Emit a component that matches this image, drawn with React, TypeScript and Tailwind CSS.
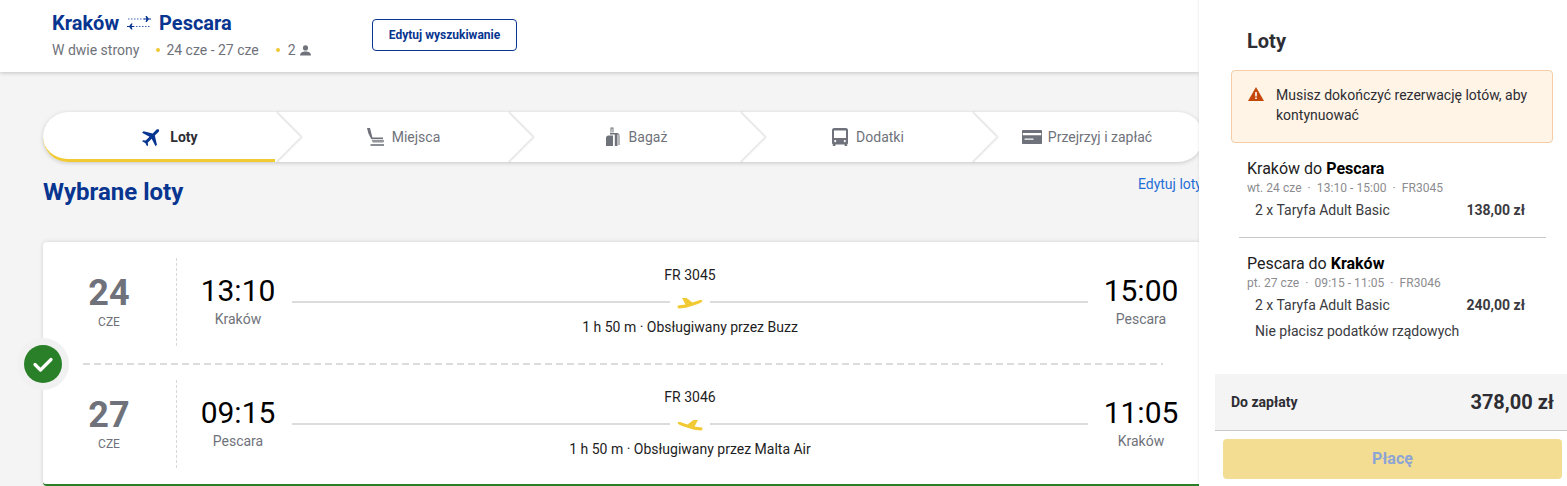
import { ReactNode } from "react";

const steps = [
  { label: "Loty", active: true, icon: <PlaneIcon /> },
  { label: "Miejsca", icon: <SeatIcon /> },
  { label: "Bagaż", icon: <BagIcon /> },
  { label: "Dodatki", icon: <BusIcon /> },
  { label: "Przejrzyj i zapłać", icon: <CardIcon /> },
];

const stepZ = ["z-50 pl-[20px]", "z-40 pl-[24px]", "z-30 pl-[24px]", "z-20 pl-[24px]", "z-10"];

function PlaneIcon() {
  return (
    <svg viewBox="0 0 24 24" className="h-[24px] w-[24px] rotate-45 fill-[#073590]">
      <path d="M21 16v-2l-8-5V3.500c0-.83-.67-1.500-1.500-1.500S10 2.670 10 3.500V9l-8 5v2l8-2.500V19l-2 1.500V22l3.500-1 3.500 1v-1.500L13 19v-5.500l8 2.500z" />
    </svg>
  );
}

function SeatIcon() {
  return (
    <svg viewBox="0 0 20 20" className="h-[20px] w-[20px] fill-[#6f727a]">
      <path d="M1 1h3l2.400 9.500H17v1.600H5.200L2.400 6.500z" />
      <path d="M5.500 12.800h11.500c.5 0 1 .5 1 1.200s-.5 1.600-1 1.600H6.800z" opacity="0.75" />
      <path d="M4.500 17.200h13.500v1.600H4.500z" />
    </svg>
  );
}

function BagIcon() {
  return (
    <svg viewBox="0 0 20 20" className="h-[20px] w-[20px] fill-[#6f727a]">
      <path d="M7.500 0.500h3v5H9.500V1.500h-1v4h-1z" />
      <path d="M3 11c0-1.500 1-2.500 2.500-2.500H10V19H3z" />
      <path d="M7 6h7c1.500 0 2.500 1 2.500 2.500V18h-1V7.500h-1V19H11.800V7.500H7z" />
    </svg>
  );
}

function BusIcon() {
  return (
    <svg viewBox="0 0 20 20" className="h-[20px] w-[20px] fill-[#6f727a]">
      <path
        fillRule="evenodd"
        d="M4 1h12c1 0 2 1 2 2v13c0 .600-.3 1-.8 1.200V19h-2.600v-1.600H5.400V19H2.800v-1.800C2.300 17 2 16.600 2 16V3c0-1 1-2 2-2zm0 2.400V11h12V3.400zM5.200 13a1.100 1.100 0 1 0 0 2.200 1.100 1.100 0 0 0 0-2.200zm9.600 0a1.100 1.100 0 1 0 0 2.200 1.100 1.100 0 0 0 0-2.200z"
      />
    </svg>
  );
}

function CardIcon() {
  return (
    <svg viewBox="0 0 20 14" className="h-[14px] w-[20px] fill-[#6f727a]">
      <path
        fillRule="evenodd"
        d="M1 0h18c.600 0 1 .400 1 1v12c0 .600-.400 1-1 1H1c-.600 0-1-.400-1-1V1c0-.600.400-1 1-1zm-.2 3v2.200h18.400V3zM2.500 8.500v1.200h9V8.500z"
      />
    </svg>
  );
}

function RouteIcon() {
  return (
    <svg viewBox="0 0 24 14" className="h-[14px] w-[24px]">
      <path d="M1 3h17M6 10.500h17" stroke="#3f66b5" strokeWidth="1.200" strokeDasharray="1.500 1.500" fill="none" />
      <path d="M18.500 0h1.300l1.900 2.400H24v1.200h-2.300L19.800 6h-1.300l.8-2.400h-2.300V2.400h2.300z" fill="#073590" />
      <path d="M5.500 7.500H4.200L2.300 9.900H0v1.200h2.300l1.900 2.400h1.300l-.8-2.400h2.300V9.900H4.700z" fill="#073590" />
    </svg>
  );
}

function PersonIcon() {
  return (
    <svg viewBox="0 0 12 12" className="h-[11px] w-[11px] fill-[#6f727a]">
      <circle cx="6" cy="3.200" r="2.800" />
      <path d="M0 11.500c0-3 2.500-4.500 6-4.500s6 1.500 6 4.500z" />
    </svg>
  );
}

function YellowPlane({ landing }: { landing?: boolean }) {
  return (
    <svg viewBox="0 0 26 13" className="h-[13px] w-[26px] fill-[#f1c933]">
      <g transform={landing ? "translate(26 0) scale(-1 1)" : undefined}>
        <path d="M1 9.500L8.500 8.500 5 2h4.500l6 4.500 6-2c2-.7 3.800-.5 3.800.5s-2 2-4.500 2.900L9 11.800 2 12.500c-1.500 0-2-2.500-1-3z" />
      </g>
    </svg>
  );
}

function Dot() {
  return <span className="ml-[17px] mr-[6px] h-[4px] w-[4px] rounded-full bg-[#f1c933]" />;
}

function Step({ label, active, icon, index }: { label: string; active?: boolean; icon: ReactNode; index: number }) {
  return (
    <div className={`relative flex h-full w-[232px] items-center justify-center ${stepZ[index]}`}>
      {index < 4 && (
        <div className="absolute right-[-18px] top-[7px] h-[36px] w-[36px] rotate-45 bg-white shadow-[1.5px_-1.5px_2px_rgba(0,0,0,0.12)]" />
      )}
      {active && <div className="absolute inset-0 rounded-l-[25px] border-b-[3px] border-[#f1c933]" />}
      <div className="relative flex items-center gap-[6px]">
        {icon}
        <span className={active ? "text-[14px] font-bold text-[#2d2d33]" : "text-[14px] text-[#6f727a]"}>{label}</span>
      </div>
    </div>
  );
}

function FlightRow(props: {
  day: string;
  dep: string;
  from: string;
  arr: string;
  to: string;
  code: string;
  note: string;
  landing?: boolean;
}) {
  return (
    <div className="flex h-[88px]">
      <div className="flex w-[133px] flex-col items-center pr-[1px] pt-[15px]">
        <span className="text-[36px] font-bold leading-[41px] text-[#6f727a]">{props.day}</span>
        <span className="text-[12px] leading-[16px] text-[#6f727a]">CZE</span>
      </div>
      <div className="flex flex-1 border-l border-dashed border-[#d8d8d8] pl-[24px] pr-[25px]">
        <div className="flex w-[74px] flex-col items-center pt-[15px]">
          <span className="text-[30px] leading-[36px] text-black">{props.dep}</span>
          <span className="text-[14px] leading-[20px] text-[#6f727a]">{props.from}</span>
        </div>
        <div className="ml-[17px] mr-[16px] flex flex-1 flex-col items-center">
          <span className="pt-[8px] text-[14px] leading-[18px] text-[#1d1d22]">{props.code}</span>
          <div className="mb-[-1px] mt-[1px] flex h-[34px] w-full items-center gap-[7px]">
            <div className="h-[2px] flex-1 bg-[#dcdcdc]" />
            <YellowPlane landing={props.landing} />
            <div className="h-[2px] flex-1 bg-[#dcdcdc]" />
          </div>
          <span className="text-[14px] leading-[18px] text-[#1d1d22]">{props.note}</span>
        </div>
        <div className="flex w-[74px] flex-col items-center pt-[15px]">
          <span className="text-[30px] leading-[36px] text-black">{props.arr}</span>
          <span className="text-[14px] leading-[20px] text-[#6f727a]">{props.to}</span>
        </div>
      </div>
    </div>
  );
}

function Segment(props: { from: string; to: string; sub: string; price: string; children?: ReactNode }) {
  return (
    <div>
      <div className="pl-[48px] text-[16px] leading-[20px] text-[#1d1d22]">
        {props.from} do <b className="font-bold text-black">{props.to}</b>
      </div>
      <div className="whitespace-pre pl-[48px] pt-[1px] text-[12px] leading-[16px] tracking-[0.05px] text-[#8c8c90]">
        {props.sub}
      </div>
      <div className="flex justify-between pl-[56px] pr-[42px] pt-[4px] text-[14px] leading-[20px] text-[#3a3a40]">
        <span>2 x Taryfa Adult Basic</span>
        <b className="font-bold">{props.price}</b>
      </div>
      {props.children}
    </div>
  );
}

export default function App() {
  return (
    <div className="flex h-[486px] w-[1567px] overflow-hidden bg-[#f4f4f4] font-['Roboto',sans-serif]">
      <div className="w-[1199px] shrink-0 overflow-hidden">
        <header className="flex h-[72px] bg-white pl-[52px] shadow-[0_1px_4px_rgba(0,0,0,0.2)]">
          <div className="w-[320px] pt-[11px]">
            <div className="flex items-center gap-[8px] text-[20px] font-bold leading-[24px] text-[#073590]">
              Kraków <RouteIcon /> Pescara
            </div>
            <div className="flex items-center pt-[4px] text-[14px] leading-[22px] text-[#6f727a]">
              W dwie strony
              <Dot />
              24 cze - 27 cze
              <Dot />
              <span className="ml-[2px]">2</span>
              <span className="ml-[4px]">
                <PersonIcon />
              </span>
            </div>
          </div>
          <button className="mt-[19px] h-[32px] w-[145px] rounded-[4px] border border-[#073590] text-[12px] font-bold text-[#073590]">
            Edytuj wyszukiwanie
          </button>
        </header>

        <main className="ml-[43px] w-[1160px] pt-[40px]">
          <nav className="flex h-[50px] rounded-[25px] bg-white shadow-[0_1px_4px_rgba(0,0,0,0.18)]">
            {steps.map((s, i) => (
              <Step key={s.label} label={s.label} active={s.active} icon={s.icon} index={i} />
            ))}
          </nav>

          <div className="flex items-start justify-between pt-[16px]">
            <h1 className="text-[24px] font-bold leading-[28px] text-[#073590]">Wybrane loty</h1>
            <a className="mr-[1px] mt-[-1px] text-[14px] leading-[14px] text-[#1f6fd6]">Edytuj loty</a>
          </div>

          <section className="relative mt-[36px] h-[244px] rounded-[4px] border-b-2 border-[#2a8029] bg-white pt-[16px] shadow-[0_0_4px_rgba(0,0,0,0.15)]">
            <FlightRow
              day="24"
              dep="13:10"
              from="Kraków"
              arr="15:00"
              to="Pescara"
              code="FR 3045"
              note="1 h 50 m · Obsługiwany przez Buzz"
            />
            <div className="mx-[40px] mb-[15px] mt-[17px] h-[2px] bg-[repeating-linear-gradient(90deg,#dcdcdc_0,#dcdcdc_7px,transparent_7px,transparent_11px)]" />
            <FlightRow
              day="27"
              dep="09:15"
              from="Pescara"
              arr="11:05"
              to="Kraków"
              code="FR 3046"
              note="1 h 50 m · Obsługiwany przez Malta Air"
              landing
            />
            <div className="absolute left-[-26px] top-[96px] flex h-[52px] w-[52px] items-center justify-center rounded-full bg-[#f1f1f1]">
              <div className="flex h-[38px] w-[38px] items-center justify-center rounded-full bg-[#2a8029]">
                <svg viewBox="0 0 24 24" className="h-[24px] w-[24px]">
                  <path d="M4 12.500l5.500 5.500L20 7.500" stroke="white" strokeWidth="3.200" fill="none" strokeLinecap="round" strokeLinejoin="round" />
                </svg>
              </div>
            </div>
          </section>
        </main>
      </div>

      <aside className="relative z-[60] flex w-[368px] shrink-0 flex-col bg-white shadow-[-1px_0_2px_rgba(0,0,0,0.06)]">
        <h2 className="pl-[48px] pt-[29px] text-[20px] font-bold leading-[24px] text-[#2d2d33]">Loty</h2>
        <div className="ml-[32px] mr-[14px] mt-[17px] flex h-[73px] gap-[12px] rounded-[4px] border border-[#f6cda6] bg-[#fff4e5] pl-[16px] pr-[12px] pt-[14px] text-[14px] leading-[20px] text-[#2d2d33]">
          <svg viewBox="0 0 16 14" className="mt-[2px] h-[14px] w-[16px] shrink-0">
            <path d="M8 0l8 14H0z" fill="#c4470a" />
            <path d="M7.200 5h1.600v4.500H7.200zM7.200 10.500h1.600V12H7.200z" fill="white" />
          </svg>
          <span>Musisz dokończyć rezerwację lotów, aby kontynuować</span>
        </div>
        <div className="pt-[16px]">
          <Segment from="Kraków" to="Pescara" sub="wt. 24 cze  ·  13:10 - 15:00  ·  FR3045" price="138,00 zł" />
        </div>
        <div className="ml-[40px] mr-[21px] mt-[17px] border-t border-[#c8c8c8]" />
        <div className="pt-[16px]">
          <Segment from="Pescara" to="Kraków" sub="pt. 27 cze  ·  09:15 - 11:05  ·  FR3046" price="240,00 zł">
            <div className="pl-[56px] pt-[6px] text-[14px] leading-[20px] text-[#3a3a40]">Nie płacisz podatków rządowych</div>
          </Segment>
        </div>
        <div className="ml-[16px] mt-[33px] flex h-[57px] items-center justify-between border-b border-[#c8c8c8] bg-[#f4f4f4] pl-[16px] pr-[13px]">
          <span className="text-[14px] font-bold text-[#2d2d33]">Do zapłaty</span>
          <span className="text-[20px] font-bold text-[#2d2d33]">378,00 zł</span>
        </div>
        <button className="ml-[24px] mt-[8px] h-[40px] w-[339px] rounded-[4px] bg-[#f3dd92] text-[16px] font-bold text-[#8da4d6]">
          Płacę
        </button>
      </aside>
    </div>
  );
}
